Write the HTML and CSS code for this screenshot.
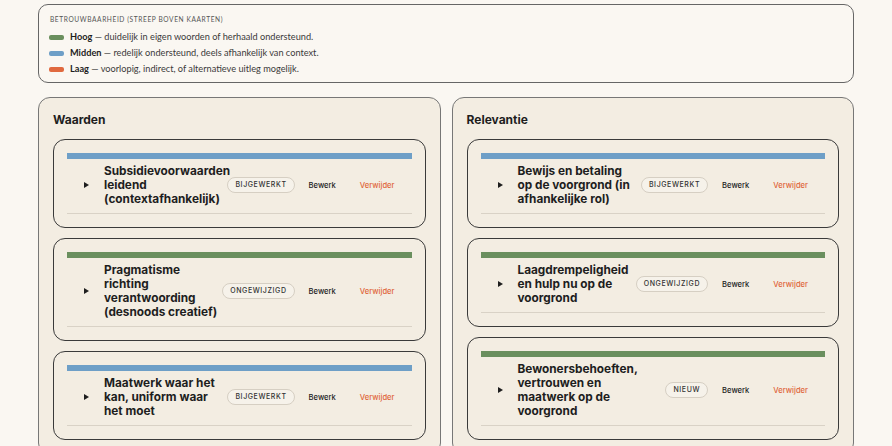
FILE: index.html
```html
<!DOCTYPE html>
<html lang="nl">
<head>
<meta charset="utf-8">
<title>Betrouwbaarheid</title>
<link rel="stylesheet" href="styles.css">
</head>
<body>
<div class="page">
  <section class="legend">
    <div class="legend-label">Betrouwbaarheid (streep boven kaarten)</div>
    <div class="legend-row"><span class="swatch high"></span><b>Hoog</b>&nbsp;— duidelijk in eigen woorden of herhaald ondersteund.</div>
    <div class="legend-row"><span class="swatch mid"></span><b>Midden</b>&nbsp;— redelijk ondersteund, deels afhankelijk van context.</div>
    <div class="legend-row"><span class="swatch low"></span><b>Laag</b>&nbsp;— voorlopig, indirect, of alternatieve uitleg mogelijk.</div>
  </section>

  <div class="columns">
    <section class="panel">
      <h2 class="panel-title">Waarden</h2>
      <div class="cards">
        <article class="card">
          <div class="bar mid"></div>
          <div class="summary">
            <span class="arrow"></span>
            <span class="title">Subsidievoorwaarden leidend (contextafhankelijk)</span>
            <span class="badge">Bijgewerkt</span>
            <button class="btn">Bewerk</button>
            <button class="btn danger">Verwijder</button>
          </div>
        </article>
        <article class="card">
          <div class="bar high"></div>
          <div class="summary">
            <span class="arrow"></span>
            <span class="title">Pragmatisme richting verantwoording (desnoods creatief)</span>
            <span class="badge">Ongewijzigd</span>
            <button class="btn">Bewerk</button>
            <button class="btn danger">Verwijder</button>
          </div>
        </article>
        <article class="card">
          <div class="bar mid"></div>
          <div class="summary">
            <span class="arrow"></span>
            <span class="title">Maatwerk waar het kan, uniform waar het moet</span>
            <span class="badge">Bijgewerkt</span>
            <button class="btn">Bewerk</button>
            <button class="btn danger">Verwijder</button>
          </div>
        </article>
      </div>
    </section>

    <section class="panel">
      <h2 class="panel-title">Relevantie</h2>
      <div class="cards">
        <article class="card">
          <div class="bar mid"></div>
          <div class="summary">
            <span class="arrow"></span>
            <span class="title">Bewijs en betaling op de voorgrond (in afhankelijke rol)</span>
            <span class="badge">Bijgewerkt</span>
            <button class="btn">Bewerk</button>
            <button class="btn danger">Verwijder</button>
          </div>
        </article>
        <article class="card">
          <div class="bar high"></div>
          <div class="summary">
            <span class="arrow"></span>
            <span class="title">Laagdrempeligheid en hulp nu op de voorgrond</span>
            <span class="badge">Ongewijzigd</span>
            <button class="btn">Bewerk</button>
            <button class="btn danger">Verwijder</button>
          </div>
        </article>
        <article class="card">
          <div class="bar high"></div>
          <div class="summary">
            <span class="arrow"></span>
            <span class="title">Bewonersbehoeften, vertrouwen en maatwerk&nbsp;op de voorgrond</span>
            <span class="badge">Nieuw</span>
            <button class="btn">Bewerk</button>
            <button class="btn danger">Verwijder</button>
          </div>
        </article>
      </div>
    </section>
  </div>
</div>
</body>
</html>
```
FILE: styles.css
```css
* { box-sizing: border-box; }
html, body { margin: 0; padding: 0; }
body {
  background: #faf7f2;
  color: #222;
  font-family: "Lato", "Liberation Sans", sans-serif;
}
.page {
  padding: 4px 38px 0;
}
.legend {
  border: 1px solid #666;
  border-radius: 10px;
  padding: 8px 10px 5px;
  background: #faf7f2;
}
.legend-label {
  font-size: 6.6px;
  line-height: 12px;
  letter-spacing: 0.6px;
  text-transform: uppercase;
  color: #555;
  margin-bottom: 4px;
  padding-left: 1px;
}
.legend-row {
  display: flex;
  align-items: center;
  font-size: 9.2px;
  line-height: 16px;
  color: #3a3a3a;
}
.legend-row b { color: #1e1e1e; font-weight: 700; }
.swatch {
  width: 15px;
  height: 5px;
  border-radius: 2px;
  margin-right: 6px;
}
.high { background: #6a8f5e; }
.mid { background: #6e9fc7; }
.low { background: #e0693f; }

.columns {
  display: grid;
  grid-template-columns: minmax(0, 1fr) minmax(0, 1fr);
  gap: 11px;
  margin-top: 14px;
}
.panel {
  min-width: 0;
  border: 1px solid #777;
  border-radius: 12px;
  background: #f3ede2;
  padding: 14px 14px 14px;
}
.panel-title {
  margin: 0 0 11px;
  font-family: "Inter", sans-serif;
  font-size: 12px;
  line-height: 16px;
  font-weight: 700;
  color: #1e1e1e;
}
.cards {
  display: flex;
  flex-direction: column;
  gap: 10px;
}
.card {
  min-width: 0;
  border: 1px solid #3a3a3a;
  border-radius: 12px;
  padding: 13px;
  background: #f3ede2;
}
.bar { height: 6px; }
.summary {
  display: flex;
  align-items: center;
  padding: 5px 5px 7px 17px;
  border-bottom: 1px solid #d9d2c6;
}
.arrow {
  flex: none;
  width: 0;
  height: 0;
  border-left: 5px solid #1e1e1e;
  border-top: 3px solid transparent;
  border-bottom: 3px solid transparent;
  margin-right: 15px;
}
.title {
  flex: 1;
  min-width: 0;
  font-family: "Inter", sans-serif;
  font-weight: 700;
  font-size: 11.8px;
  line-height: 14px;
  color: #1e1e1e;
  margin-right: 2px;
}
.badge {
  flex: none;
  height: 16px;
  line-height: 14px;
  padding: 0 7px;
  border: 1px solid #d6cfc3;
  border-radius: 999px;
  background: #f6f2ea;
  font-family: "Inter", sans-serif;
  font-size: 7px;
  font-weight: 500;
  letter-spacing: 0.6px;
  text-transform: uppercase;
  color: #333;
  margin-right: 2px;
}
.btn {
  flex: none;
  border: 0;
  background: none;
  padding: 0 12px;
  font-family: "Inter", sans-serif;
  font-size: 7.6px;
  font-weight: 500;
  color: #222;
  cursor: pointer;
}
.btn.danger { color: #e0653a; }
```
